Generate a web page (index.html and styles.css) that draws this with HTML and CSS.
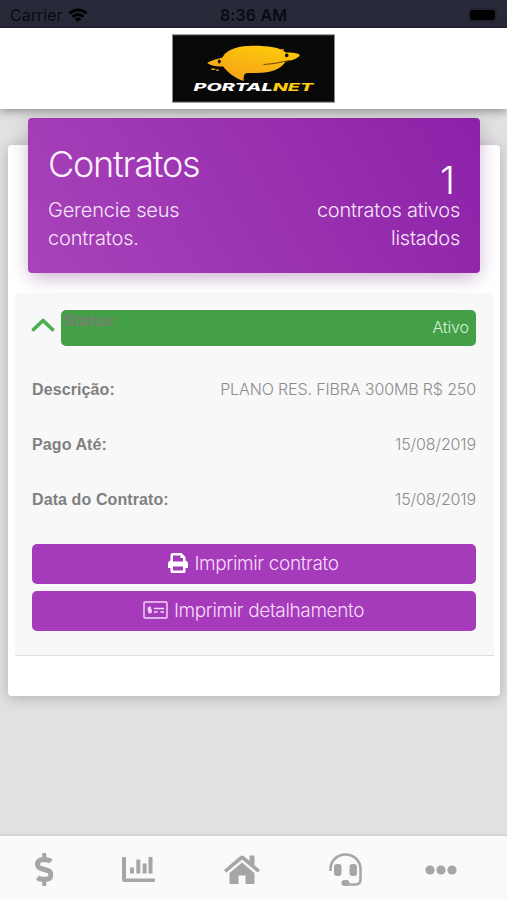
FILE: index.html
```html
<!DOCTYPE html>
<html lang="pt-BR">
<head>
<meta charset="utf-8">
<meta name="viewport" content="width=device-width, initial-scale=1">
<title>Contratos</title>
<link rel="stylesheet" href="styles.css">
</head>
<body>
<div class="app">
  <div class="status-bar">
    <div class="carrier"><span>Carrier</span>
      <svg class="wifi" viewBox="0 0 20 14"><path d="M0.4 4.4A13.8 13.8 0 0 1 19.6 4.4L17.6 6.5A10.9 10.9 0 0 0 2.4 6.5Z"/><path d="M3.6 7.7A9.2 9.2 0 0 1 16.4 7.7L14.3 9.7A6.3 6.3 0 0 0 5.7 9.7Z"/><path d="M6.8 10.9A4.6 4.6 0 0 1 13.2 10.9L10 14Z"/></svg>
    </div>
    <div class="clock">8:36 AM</div>
    <div class="battery-slot"><span class="battery"></span></div>
  </div>
  <header class="header">
    <svg class="logo" viewBox="0 0 162 68">
      <defs><linearGradient id="gold" x1="0" y1="1" x2="0.5" y2="0"><stop offset="0" stop-color="#f79a1c"/><stop offset="1" stop-color="#fcc60a"/></linearGradient></defs>
      <rect x=".5" y=".5" width="161" height="67" fill="#080808" stroke="#8b8b8b"/>
      <path fill="url(#gold)" d="M35 28.500C40 25 46 24.500 50 23C55 14 68 11.500 80 11.500C95 11.500 107 13 113 18C119 18 125 18.500 127 20.500C126 24 119 26 113 27C109 34 99 38.500 84 38.500C77 38.500 73 38 72 40C71 42 71.500 44 71 46.500C62 43 55 38 51 32C46 32 40 32 35 28.500Z"/>
      <path d="M91 30Q104 29 117 26" fill="none" stroke="#6b4b08"/>
      <ellipse cx="47" cy="27" rx="1.500" ry="2" fill="#111"/><ellipse cx="114" cy="21" rx="1.800" ry="1.800" fill="#111"/>
      <path d="M39 34h4v1.500h-4zM44 35h2.500v1.500H44zM108 14.500h3v1.500h-3z" fill="#e99b14"/>
      <text class="logo-text" x="21.500" y="56.500" textLength="119" lengthAdjust="spacingAndGlyphs" fill="#fff">PORTAL<tspan fill="#fccc0c">NET</tspan></text>
    </svg>
  </header>
  <main class="content">
    <section class="card">
      <div class="banner">
        <div class="banner-left"><h1>Contratos</h1><p>Gerencie seus<br>contratos.</p></div>
        <div class="banner-right"><div class="count">1</div><p>contratos ativos<br>listados</p></div>
      </div>
      <div class="panel">
        <div class="status-row">
          <svg class="chevron" viewBox="0 0 24 16"><path d="M2.500 12.500L12 3.500L21.500 12.500"/></svg>
          <div class="status"><b>Status:</b><span>Ativo</span></div>
        </div>
        <div class="row"><b>Descrição:</b><span>PLANO RES. FIBRA 300MB R$ 250</span></div>
        <div class="row"><b>Pago Até:</b><span>15/08/2019</span></div>
        <div class="row"><b>Data do Contrato:</b><span>15/08/2019</span></div>
        <div class="actions">
          <button class="button"><svg class="print" viewBox="0 0 20 20"><path fill-rule="evenodd" d="M5 0H13.500L17.500 4V7.500Q20 8 20 10.500V15H17.500V18.500Q17.500 20 16 20H4Q2.500 20 2.500 18.500V15H0V10.500Q0 8 2.500 7.500V2Q2.500 0 5 0ZM5 2.500V8.500H15V5H12.500V2.500ZM5 13.500V17.500H15V13.500Z"/></svg><span>Imprimir contrato</span></button>
          <button class="button"><svg class="check" viewBox="0 0 25 18"><rect x="1" y="1" width="23" height="16" rx="1"/><path class="marks" d="M11 7.500H21M11 11H14.500M17.500 11H21"/><path class="marks" d="M8 7H5.500V9H8V11H5M6.700 5.500V12.500"/></svg><span>Imprimir detalhamento</span></button>
        </div>
      </div>
    </section>
  </main>
  <nav class="nav">
    <svg class="dollar" viewBox="0 0 288 512"><path d="M209.200 233.400l-108-31.600C88.700 198.200 80 186.500 80 173.500c0-16.300 13.200-29.500 29.500-29.500h66.300c12.200 0 24.200 3.700 34.200 10.500 6.100 4.100 14.300 3.100 19.500-2l34.800-34c7.100-6.900 6.100-18.400-1.800-24.500C238 74.800 207.400 64.100 176 64V16c0-8.800-7.200-16-16-16h-32c-8.800 0-16 7.200-16 16v48h-2.500C45.800 64-5.400 118.700.5 183.600c4.200 46.100 39.400 83.600 83.800 96.600l102.500 30c12.500 3.700 21.200 15.300 21.200 28.300 0 16.300-13.200 29.500-29.500 29.500h-66.300C100 368 88 364.300 78 357.500c-6.100-4.100-14.300-3.100-19.500 2l-34.800 34c-7.100 6.900-6.100 18.400 1.800 24.500 24.500 19.200 55.100 29.900 86.500 30v48c0 8.800 7.200 16 16 16h32c8.800 0 16-7.200 16-16v-48.200c46.600-.9 90.300-28.600 105.700-72.700 21.500-61.600-14.600-124.800-72.500-141.700z"/></svg>
    <svg class="chart" viewBox="0 0 33 26"><path d="M0 1Q0 0 1 0H3Q4 0 4 1V21.500H32Q33 21.500 33 22.500V24Q33 25 32 25H2Q0 25 0 23Z"/><path d="M8 10.500h4v6h-4zM14.300 2.500h4v14h-4zM20.600 6.500h4v10h-4zM26.500 0h4v16.500h-4z"/></svg>
    <svg class="home" viewBox="0 0 36 30"><path d="M18 7.500L30.500 18V28Q30.500 29 29.500 29H21.500V20.500H14.500V29H6.500Q5.500 29 5.500 28V18Z"/><path d="M.5 14.500L16 1.300Q18 -.3 20 1.300L25.500 6V1.500Q25.500.5 26.500.5H29.500Q30.500.5 30.500 1.500V10.300L35.500 14.500Q36 15 35.500 15.700L34.300 17Q33.700 17.700 33 17L18 4.500L3 17Q2.300 17.700 1.700 17L.5 15.700Q0 15 .5 14.500Z"/></svg>
    <svg class="headset" viewBox="0 0 33 33"><path class="line" d="M1.500 18V16C1.500 8 8 1.500 16.500 1.500S31.500 8 31.500 16V26.500Q31.500 31.500 26.500 31.500H16"/><rect x="5" y="11" width="7.500" height="12" rx="3"/><rect x="20.500" y="11" width="7.500" height="12" rx="3"/><rect x="12.500" y="27" width="8" height="6" rx="3"/></svg>
    <svg class="dots" viewBox="0 0 32 10"><circle cx="5" cy="5" r="4.600"/><circle cx="16" cy="5" r="4.600"/><circle cx="27" cy="5" r="4.600"/></svg>
  </nav>
</div>
</body>
</html>
```
FILE: styles.css
```css
* { box-sizing: border-box; }
body { margin: 0; background: #e1e1e1; font-family: Inter, "Liberation Sans", sans-serif; font-weight: 300; color: #808080; }
h1, p { margin: 0; font-weight: 300; }
.app { height: 900px; display: flex; flex-direction: column; overflow: hidden; }
.status-bar { height: 28px; flex: none; display: grid; grid-template-columns: 1fr auto 1fr; align-items: center; padding: 2px 10px 0; background: #282a3a; color: #090a10; border-bottom: 1px solid #222433; font-size: 16px; font-weight: 400; }
.carrier { display: flex; align-items: center; gap: 6px; letter-spacing: 0; }
.wifi { width: 20px; height: 14px; }
.clock { font-weight: 600; letter-spacing: .15px; }
.battery-slot { display: flex; justify-content: flex-end; padding-right: 2px; }
.battery { width: 25px; height: 10px; border-radius: 3px; background: #000; box-shadow: 0 0 0 2px #212332; }
.header { height: 81px; flex: none; padding: 6px 0 0; display: flex; justify-content: center; align-items: flex-start; background: #fff; position: relative; z-index: 1; box-shadow: 0 2px 9px rgba(0,0,0,.38); }
.logo { width: 163px; height: 69px; }
.logo-text { font: italic 800 10px Inter, sans-serif; }
.content { flex: 1; padding: 36px 7px 0 8px; }
.card { height: 551px; padding: 0 6px 0 7px; background: #fff; border-radius: 4px; box-shadow: 0 2px 14px rgba(0,0,0,.22); }
.banner { height: 155px; margin: 0 14px 0 13px; transform: translateY(-27px); display: flex; justify-content: space-between; padding: 27px 20px 0; border-radius: 4px; color: #f6e2f9; background: linear-gradient(60deg, #a843ba, #8c22a8); box-shadow: 0 8px 18px -5px rgba(156,39,176,.3), 0 3px 20px rgba(0,0,0,.13); }
.banner h1 { font-size: 36px; line-height: 38px; letter-spacing: -1.250px; color: #fbf0fc; }
.banner p { font-size: 20px; line-height: 28px; letter-spacing: -.18px; }
.banner-left p { margin-top: 13px; }
.banner-right { text-align: right; }
.banner-right p { letter-spacing: -.25px; }
.count { font-size: 38px; line-height: 36px; margin: 17px 5px 2px 0; color: #fff; height: 32px; }
.panel { height: 363px; margin-top: -7px; padding: 17px 18px 0 17px; background: #f8f8f8; border-bottom: 1.500px solid #ddd; }
.status-row { display: flex; height: 36px; }
.chevron { width: 24px; height: 16px; margin: 7px 6px 0 -1px; fill: none; stroke: #4caf50; stroke-width: 3.700; stroke-linecap: round; stroke-linejoin: round; }
.status { flex: 1; display: flex; justify-content: space-between; padding: 0 7px 0 2px; background: #43a047; border-radius: 5px; font-size: 16px; }
.status b { font: 700 16px/22px "Liberation Sans", sans-serif; color: #78806f; }
.status span { line-height: 35px; color: #d9f0da; letter-spacing: -.1px; }
.row { height: 55px; display: flex; justify-content: space-between; align-items: center; font-size: 16px; }
.status-row + .row { margin-top: 16px; }
.row b { font: 700 16px "Liberation Sans", sans-serif; letter-spacing: .1px; }
.row span { letter-spacing: -.13px; color: #8c8c8c; padding-bottom: 2px; }
.actions { margin-top: 17px; display: flex; flex-direction: column; gap: 7px; }
.button { height: 40px; border: 0; border-radius: 5px; padding: 0 1px 2px 0; display: flex; justify-content: center; align-items: center; gap: 6px; background: #a53abb; color: #f5ddf9; font: 300 19px Inter, sans-serif; letter-spacing: -.37px; }
.print { width: 20px; height: 20px; fill: #fff; }
.check { width: 25px; height: 18px; fill: none; stroke: #f4d9f8; stroke-width: 1.400; }
.marks { stroke-width: 1.700; }
.nav { height: 66px; flex: none; border-top: 2px solid #d5d5d5; background: #fafafa; display: grid; grid-template-columns: 88px 100px 107px 101px 90px; justify-items: center; align-items: center; padding-top: 3px; fill: #a6a6a6; }
.dollar { width: 18.500px; height: 33px; }
.chart { width: 33px; height: 26px; }
.home { width: 36px; height: 30px; }
.headset { width: 33px; height: 33px; }
.headset .line { fill: none; stroke: #a6a6a6; stroke-width: 2.500; }
.dots { width: 32px; height: 10px; }
```
